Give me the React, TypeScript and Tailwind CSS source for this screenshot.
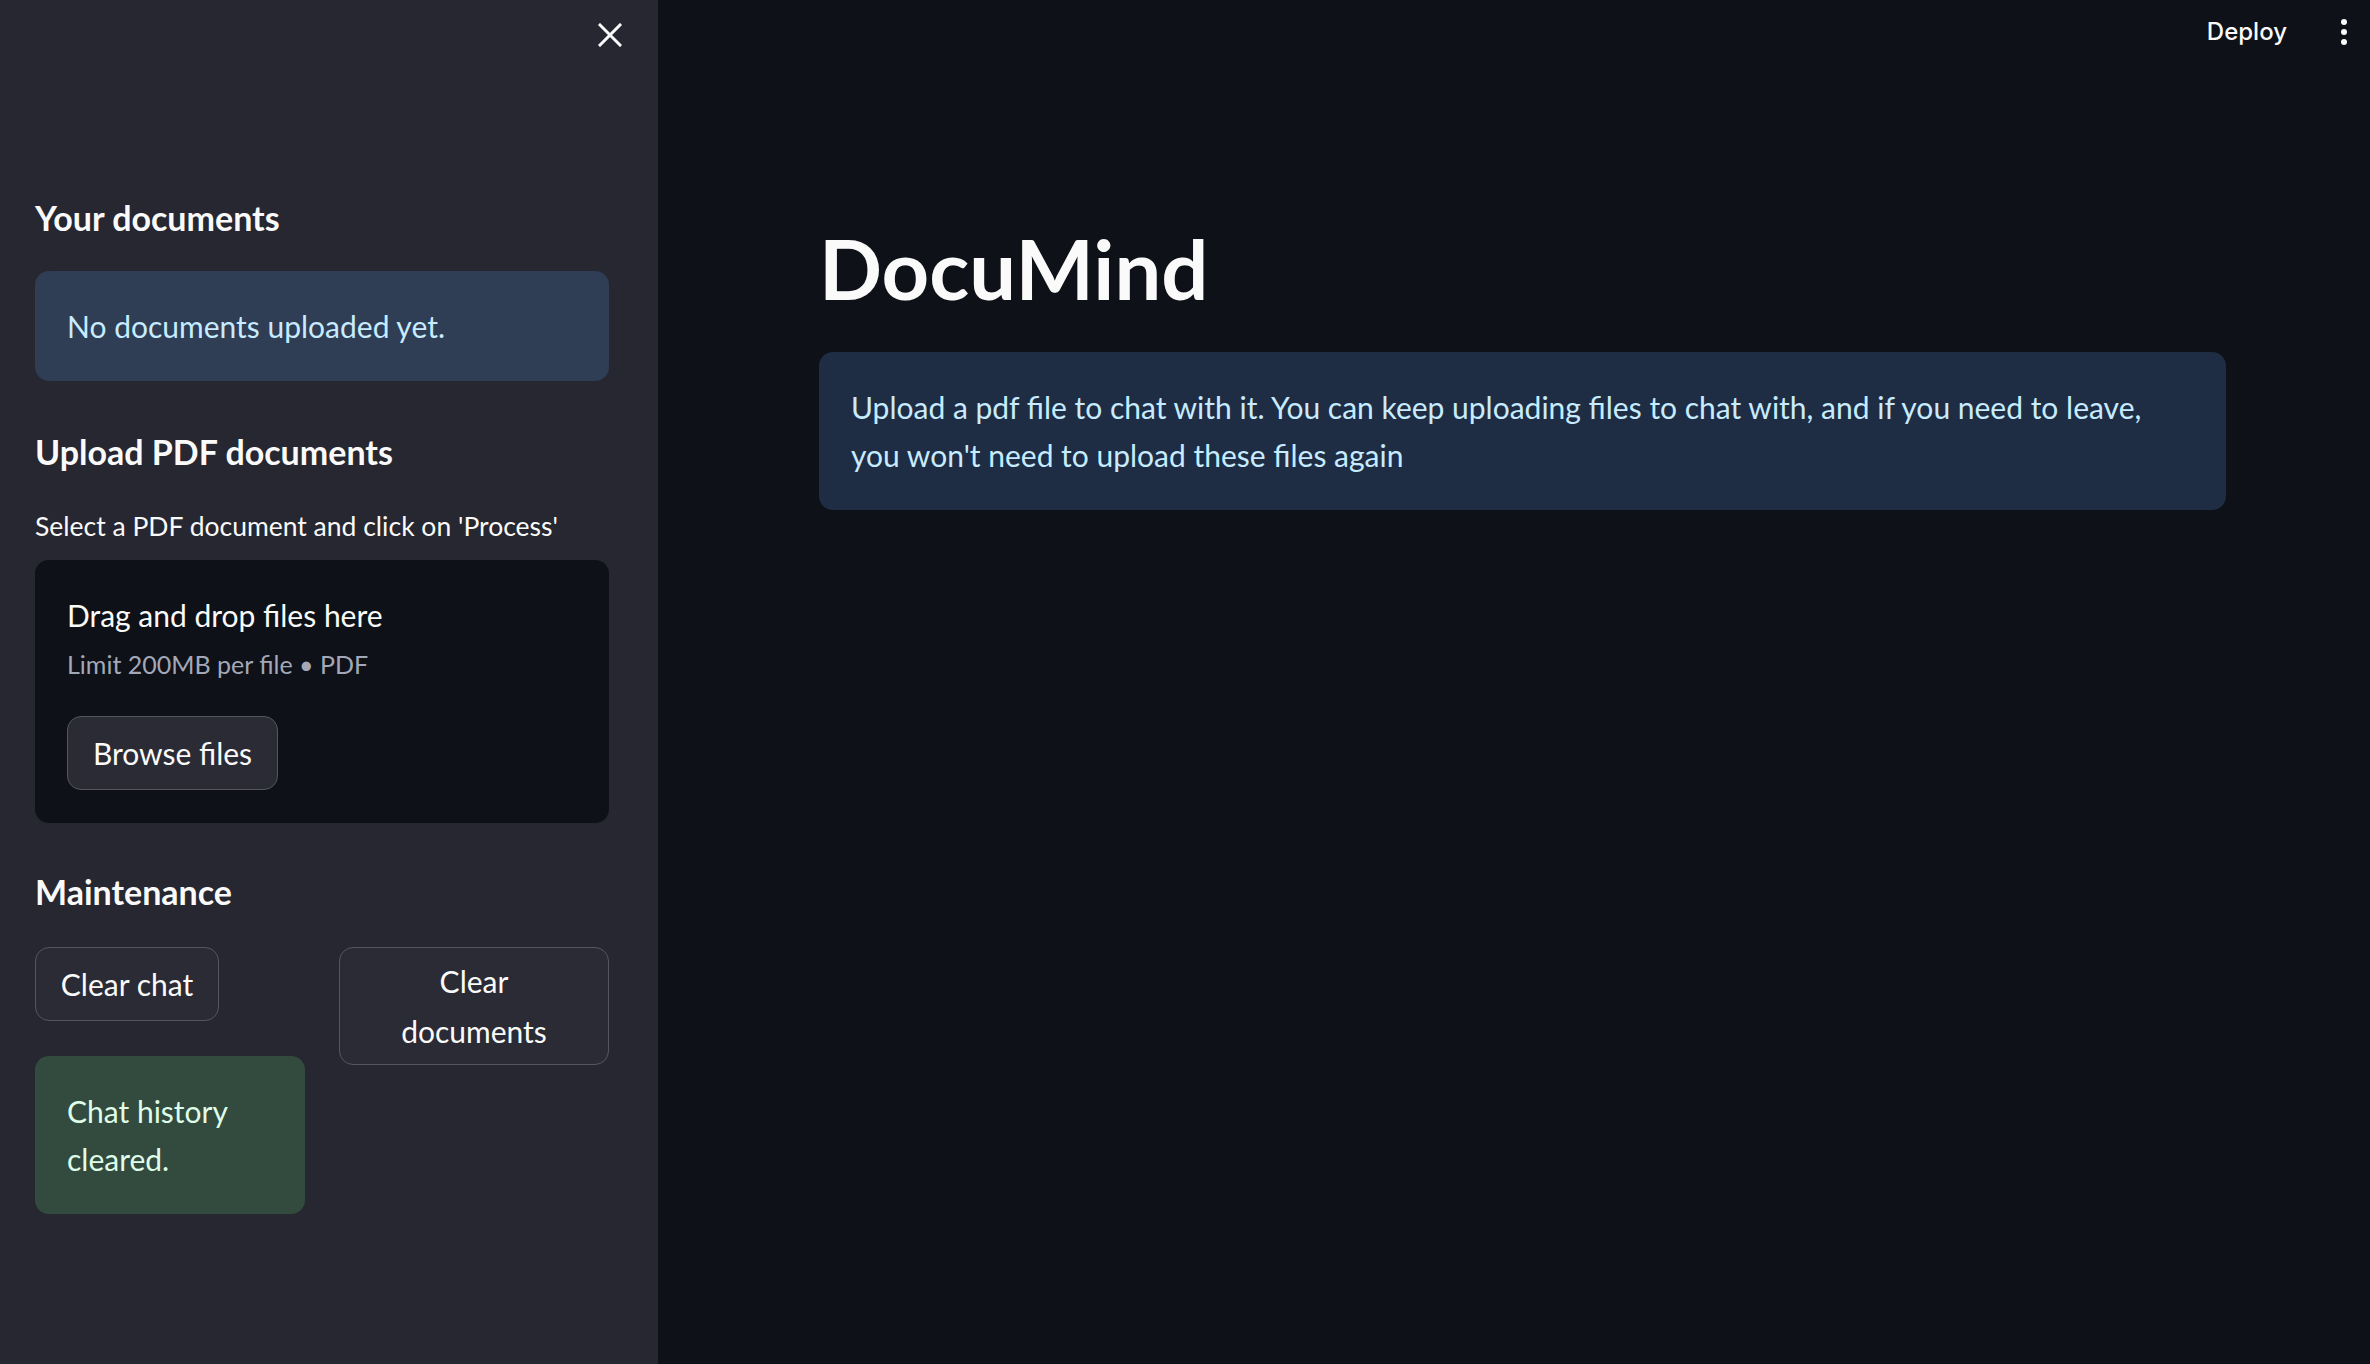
const font = { fontFamily: "Lato, 'Noto Sans', sans-serif" };

function SideButton({ children, className = "" }: { children: React.ReactNode; className?: string }) {
  return (
    <button
      className={
        "min-h-[74px] rounded-[14px] border-[1.5px] border-[#55565e] bg-[#2a2b35] px-[12px] py-[8px] text-center text-[30px] leading-[50px] text-[#fafafa] " +
        className
      }
    >
      {children}
    </button>
  );
}

export default function App() {
  return (
    <div className="flex h-[1364px] w-full overflow-hidden bg-[#0e1117] text-[#fafafa]" style={font}>
      {/* sidebar */}
      <aside className="flex w-[658px] shrink-0 flex-col bg-[#262730]">
        <div className="flex justify-end pr-[36px] pt-[23px]">
          <svg width="24" height="24" viewBox="0 0 24 24" stroke="#fafafa" strokeWidth="3" strokeLinecap="square">
            <line x1="2" y1="2" x2="22" y2="22" />
            <line x1="22" y1="2" x2="2" y2="22" />
          </svg>
        </div>

        <div className="flex flex-col pl-[35px] pr-[49px]">
          <h3 className="mt-[149px] text-[34px] font-bold leading-[43px]">Your documents</h3>
          <div className="mt-[32px] rounded-[14px] bg-[#2f3d55] px-[32px] py-[31px] text-[30px] leading-[48px] text-[#c7ebff]">
            No documents uploaded yet.
          </div>

          <h3 className="mt-[49px] text-[34px] font-bold leading-[43px]">Upload PDF documents</h3>
          <p className="mt-[35px] text-[26.5px] leading-[36px]">Select a PDF document and click on 'Process'</p>

          <div className="mt-[16px] flex flex-col items-start rounded-[14px] bg-[#0e1117] px-[32px] pb-[33px] pt-[32px]">
            <span className="text-[30px] leading-[46px]">Drag and drop files here</span>
            <span className="mt-[9px] text-[25px] leading-[34px] text-[#a3a8b8]">Limit 200MB per file • PDF</span>
            <SideButton className="mt-[35px] w-[211px]">Browse files</SideButton>
          </div>

          <h3 className="mt-[47px] text-[34px] font-bold leading-[43px]">Maintenance</h3>

          <div className="mt-[34px] grid grid-cols-2 gap-x-[34px]">
            <div className="flex flex-col items-start gap-[35px]">
              <SideButton className="w-[184px]">Clear chat</SideButton>
              <div className="w-full rounded-[14px] bg-[#334b3e] px-[32px] py-[31px] text-[30px] leading-[48px] text-[#dffde9]">
                Chat history cleared.
              </div>
            </div>
            <div className="flex flex-col items-stretch">
              <SideButton>
                Clear
                <br />
                documents
              </SideButton>
            </div>
          </div>
        </div>
      </aside>

      {/* main */}
      <main className="flex min-w-0 flex-1 flex-col">
        <header className="flex h-[64px] items-center justify-end gap-[45px] pr-[14px]">
          <span className="text-[24px] font-medium" style={{ fontFamily: "Inter, sans-serif" }}>
            Deploy
          </span>
          <svg width="24" height="30" viewBox="0 0 24 30" fill="#fafafa">
            <circle cx="12" cy="5" r="3" />
            <circle cx="12" cy="15" r="3" />
            <circle cx="12" cy="25" r="3" />
          </svg>
        </header>

        <div className="ml-[161px] mt-[154px] w-[1407px]">
          <h1 className="text-[83px] font-bold leading-[101px]">DocuMind</h1>
          <div className="mt-[33px] rounded-[14px] bg-[#1f2d44] px-[32px] py-[31px] text-[30px] leading-[48px] text-[#c7ebff]">
            Upload a pdf file to chat with it. You can keep uploading files to chat with, and if you need to leave, you won't
            need to upload these files again
          </div>
        </div>
      </main>
    </div>
  );
}
